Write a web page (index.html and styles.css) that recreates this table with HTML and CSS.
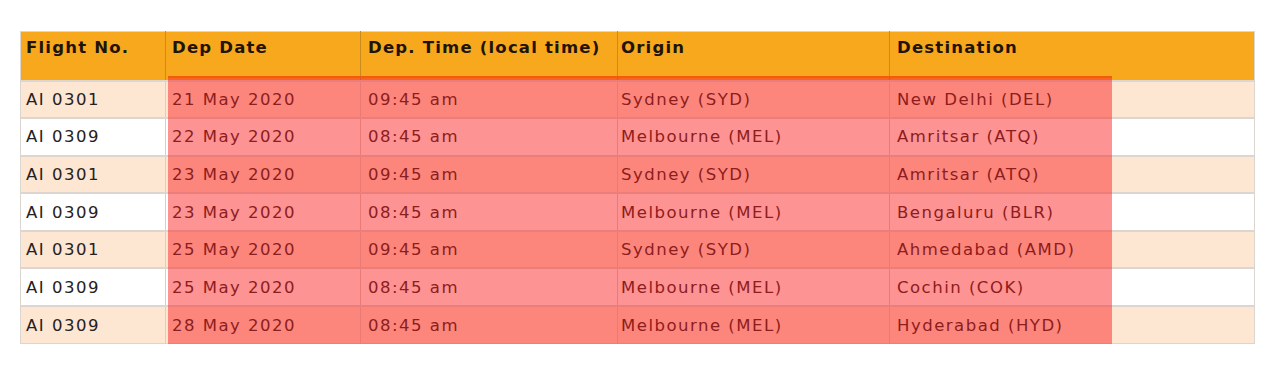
FILE: index.html
```html
<!DOCTYPE html>
<html>
<head>
<meta charset="utf-8">
<link rel="stylesheet" href="styles.css">
</head>
<body>
<div class="wrap">
  <table class="flights">
    <colgroup>
      <col class="c1"><col class="c2"><col class="c3"><col class="c4"><col class="c5">
    </colgroup>
    <thead>
      <tr>
        <th>Flight No.</th>
        <th>Dep Date</th>
        <th>Dep. Time (local time)</th>
        <th>Origin</th>
        <th>Destination</th>
      </tr>
    </thead>
    <tbody>
      <tr class="odd"><td>AI 0301</td><td>21 May 2020</td><td>09:45 am</td><td>Sydney (SYD)</td><td>New Delhi (DEL)</td></tr>
      <tr><td>AI 0309</td><td>22 May 2020</td><td>08:45 am</td><td>Melbourne (MEL)</td><td>Amritsar (ATQ)</td></tr>
      <tr class="odd"><td>AI 0301</td><td>23 May 2020</td><td>09:45 am</td><td>Sydney (SYD)</td><td>Amritsar (ATQ)</td></tr>
      <tr><td>AI 0309</td><td>23 May 2020</td><td>08:45 am</td><td>Melbourne (MEL)</td><td>Bengaluru (BLR)</td></tr>
      <tr class="odd"><td>AI 0301</td><td>25 May 2020</td><td>09:45 am</td><td>Sydney (SYD)</td><td>Ahmedabad (AMD)</td></tr>
      <tr><td>AI 0309</td><td>25 May 2020</td><td>08:45 am</td><td>Melbourne (MEL)</td><td>Cochin (COK)</td></tr>
      <tr class="odd"><td>AI 0309</td><td>28 May 2020</td><td>08:45 am</td><td>Melbourne (MEL)</td><td>Hyderabad (HYD)</td></tr>
    </tbody>
  </table>
  <div class="highlight"></div>
</div>
</body>
</html>
```
FILE: styles.css
```css
html, body {
  margin: 0;
  padding: 0;
  background: #ffffff;
}
body {
  font-family: "DejaVu Sans", Verdana, sans-serif;
}
.wrap {
  position: relative;
  padding: 31px 0 0 20px;
  width: 1234px;
}
.flights {
  border-collapse: collapse;
  table-layout: fixed;
  width: 1234px;
  border: 1px solid #dcd6d0;
}
.c1 { width: 145px; }
.c2 { width: 195px; }
.c3 { width: 257px; }
.c4 { width: 272px; }
.c5 { width: 365px; }
.flights th {
  background: #f7a81d;
  color: #1e1408;
  font-size: 16.5px;
  font-weight: bold;
  letter-spacing: 1.2px;
  text-align: left;
  vertical-align: top;
  height: 49px;
  box-sizing: border-box;
  padding: 6px 0 0 5px;
  border-left: 1px solid #c98b1c;
  white-space: nowrap;
}
.flights th:first-child { border-left: none; }
.flights td {
  font-size: 16.5px;
  letter-spacing: 1.5px;
  color: #262020;
  height: 37.6px;
  box-sizing: border-box;
  padding: 0 0 0 5px;
  vertical-align: middle;
  border-top: 2px solid #ddd6d0;
  border-left: 1px solid #d8cfc6;
  white-space: nowrap;
}
.flights td:first-child { border-left: none; }
.flights tr.odd td { background: #fde6d2; }
.flights th:nth-child(2), .flights td:nth-child(2) { padding-left: 6px; }
.flights th:nth-child(3), .flights td:nth-child(3) { padding-left: 7px; }
.flights th:nth-child(4), .flights td:nth-child(4) { padding-left: 3px; }
.flights th:nth-child(5), .flights td:nth-child(5) { padding-left: 7px; }
.highlight {
  position: absolute;
  left: 168px;
  top: 76px;
  width: 944px;
  height: 267px;
  background: rgba(250, 30, 30, 0.48);
  border-top: 2px solid rgba(240, 90, 10, 0.85);
}
```
